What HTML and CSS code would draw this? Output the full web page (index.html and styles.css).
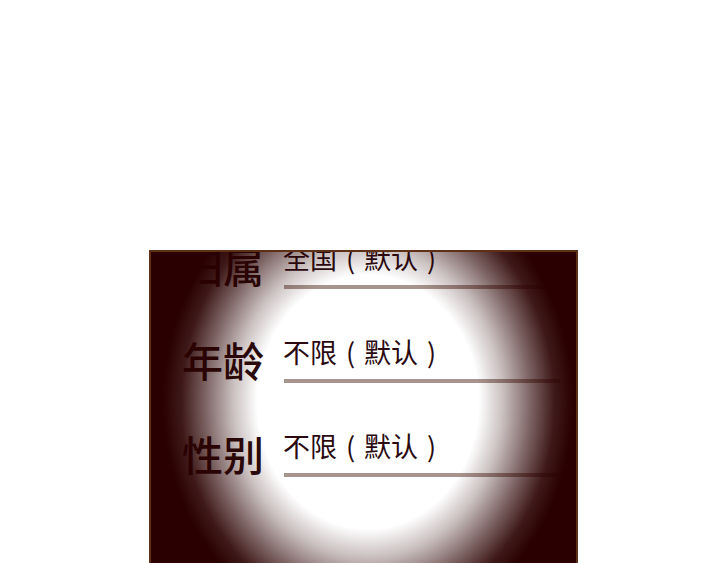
FILE: index.html
```html
<!DOCTYPE html>
<html lang="zh-CN">
<head>
<meta charset="utf-8">
<title>筛选</title>
<link rel="stylesheet" href="styles.css">
</head>
<body>
<div class="page">
  <div class="panel">
    <div class="rows">
      <div class="row">
        <div class="label">归属</div>
        <div class="field">
          <div class="value">全国<span class="paren">(</span>默认<span class="paren">)</span></div>
          <div class="line"></div>
        </div>
      </div>
      <div class="row">
        <div class="label">年龄</div>
        <div class="field">
          <div class="value">不限<span class="paren">(</span>默认<span class="paren">)</span></div>
          <div class="line"></div>
        </div>
      </div>
      <div class="row">
        <div class="label">性别</div>
        <div class="field">
          <div class="value">不限<span class="paren">(</span>默认<span class="paren">)</span></div>
          <div class="line"></div>
        </div>
      </div>
    </div>
  </div>
</div>
</body>
</html>
```

FILE: styles.css
```css
html, body {
  margin: 0;
  padding: 0;
  background: #ffffff;
  height: 563px;
  overflow: hidden;
}

.page {
  padding-top: 250px;
  padding-left: 149px;
  font-family: "Noto Sans CJK SC", "Noto Sans", sans-serif;
}

.panel {
  position: relative;
  width: 425px;
  height: 311px;
  border: 2px solid #5e3018;
  border-bottom: none;
  background: #ffffff;
  overflow: hidden;
}

.panel::after {
  content: "";
  position: absolute;
  inset: 0;
  background: radial-gradient(ellipse 205px 235px at 217px 150px,
    rgba(42, 0, 0, 0) 0%,
    rgba(42, 0, 0, 0) 54%,
    rgba(42, 0, 0, 0.25) 66%,
    rgba(42, 0, 0, 0.6) 79%,
    rgba(42, 0, 0, 0.9) 91%,
    #2a0000 100%);
  pointer-events: none;
}

.rows {
  display: flex;
  flex-direction: column;
  margin-top: -9px;
}

.row {
  display: flex;
  align-items: flex-start;
  height: 94px;
}

.label {
  width: 113px;
  margin-right: 20px;
  text-align: right;
  font-size: 41px;
  line-height: 44px;
  font-weight: 500;
  color: #2a0a0a;
}

.field {
  display: flex;
  flex-direction: column;
}

.value {
  font-size: 27px;
  line-height: 30px;
  color: #2a0a10;
  white-space: nowrap;
  margin-left: -1px;
}

.paren {
  display: inline-block;
  width: 27px;
  text-align: center;
}

.line {
  width: 276px;
  height: 4px;
  margin-top: 12px;
  background: #a8948e;
}
```
